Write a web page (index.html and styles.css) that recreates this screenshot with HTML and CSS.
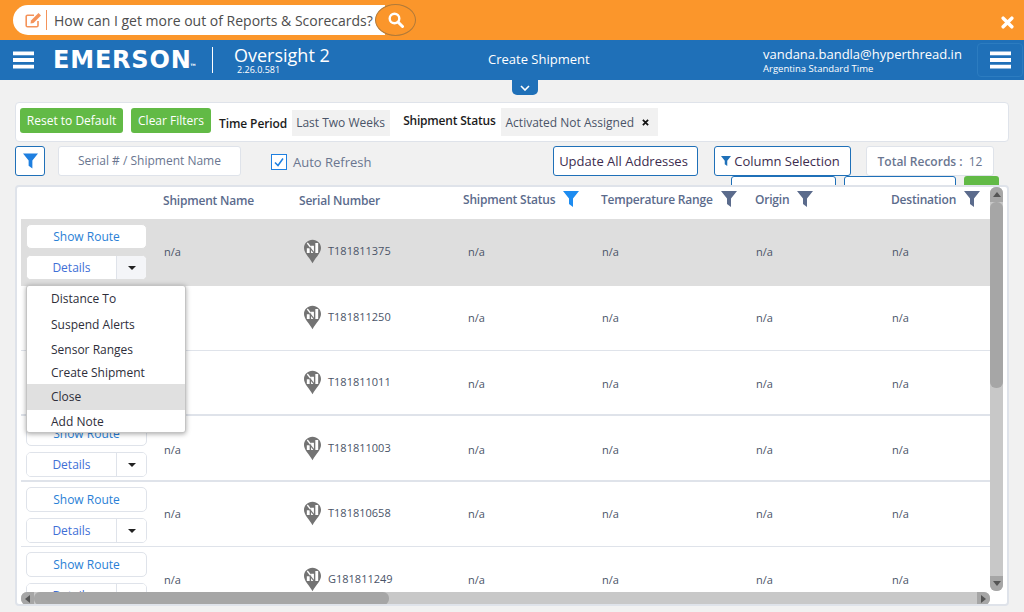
FILE: index.html
```html
<!DOCTYPE html>
<html lang="en">
<head>
    <meta charset="UTF-8">
    <title>Oversight 2</title>
    <link rel="stylesheet" href="styles.css">
</head>
<body>
    <svg class="sprites" width="0" height="0">
        <symbol id="funnel" viewBox="0 0 16 16"><path d="M0 0h16L10 7.500V16L6 13V7.500z"/></symbol>
        <symbol id="burger" viewBox="0 0 22 18"><path d="M0 0h22v4H0zM0 7h22v4H0zM0 14h22v4H0z"/></symbol>
        <symbol id="caret" viewBox="0 0 8 4"><path d="M0 0h8L4 4z"/></symbol>
        <symbol id="pin" viewBox="0 0 18 25">
            <path fill="#737373" d="M9 0c5 0 9 3.800 9 8.800 0 5.200-5.500 9.700-9 16.200C5.500 18.500 0 14 0 8.800 0 3.800 4 0 9 0z"/>
            <path fill="#fff" d="M3 9h3v5H3zM7.500 6.500h3V14h-3zM12 3.500h3V14h-3z"/>
            <path fill="none" stroke="#737373" stroke-width="1.300" d="M3 4.500L11.500 15"/>
            <path fill="none" stroke="#fff" stroke-width="1.400" d="M3.500 3.500L7 8"/>
        </symbol>
    </svg>

    <div class="topbar">
        <div class="ask">
            <svg class="ask-edit" viewBox="0 0 18 16" width="18" height="16">
                <path fill="none" stroke="#f4935a" stroke-width="1.600" d="M13 9v4.500c0 .8-.6 1.300-1.300 1.300H2.500c-.7 0-1.300-.5-1.300-1.300V4.500c0-.8.6-1.300 1.300-1.300H9"/>
                <path fill="#f4935a" d="M6 8.500L13.500 1 16 3.500 8.500 11l-3 .5z"/>
            </svg>
            <span class="ask-text">How can I get more out of Reports &amp; Scorecards?</span>
            <button class="ask-btn">
                <svg viewBox="0 0 16 16" width="16" height="16">
                    <circle cx="6.500" cy="6.500" r="4.800" fill="none" stroke="#fff" stroke-width="2.400"/>
                    <path d="M10 10l4.500 4.500" stroke="#fff" stroke-width="3" stroke-linecap="round"/>
                </svg>
            </button>
        </div>
        <svg class="top-close" viewBox="0 0 12 12" width="13" height="13">
            <path d="M2 2l8 8M10 2l-8 8" stroke="#fff" stroke-width="3.200" stroke-linecap="round"/>
        </svg>
    </div>

    <div class="header">
        <svg class="burger burger-left"><use href="#burger"/></svg>
        <div class="logo">EMERSON<span class="logo-tm">TM</span></div>
        <div class="product">
            <div class="product-name">Oversight 2</div>
            <div class="product-ver">2.26.0.581</div>
        </div>
        <div class="page-title">Create Shipment</div>
        <div class="user">
            <div class="user-mail">vandana.bandla@hyperthread.in</div>
            <div class="user-zone">Argentina Standard Time</div>
        </div>
        <div class="menu-box"><svg class="burger"><use href="#burger"/></svg></div>
    </div>
    <div class="tab-wrap">
        <div class="tab">
            <svg viewBox="0 0 10 6" width="10" height="6"><path d="M1 1l4 4 4-4" fill="none" stroke="#fff" stroke-width="1.600"/></svg>
        </div>
    </div>

    <div class="content">
        <div class="filters">
            <button class="btn-green btn-reset">Reset to Default</button>
            <button class="btn-green btn-clear">Clear Filters</button>
            <span class="filter-label label-time">Time Period</span>
            <span class="chip chip-time">Last Two Weeks</span>
            <span class="filter-label label-status">Shipment Status</span>
            <span class="chip chip-status">Activated Not Assigned
                <svg viewBox="0 0 8 8" width="7" height="7"><path d="M1 1l6 6M7 1L1 7" stroke="#111" stroke-width="2"/></svg>
            </span>
        </div>

        <div class="tools">
            <button class="btn-filter"><svg class="ico-blue"><use href="#funnel"/></svg></button>
            <div class="search">Serial # / Shipment Name</div>
            <label class="auto">
                <span class="check">
                    <svg viewBox="0 0 12 12" width="12" height="12"><path d="M2 6.500l3 3 5-7" fill="none" stroke="#1e7fe0" stroke-width="1.500"/></svg>
                </span>
                Auto Refresh
            </label>
            <button class="btn-line btn-update">Update All Addresses</button>
            <button class="btn-line btn-columns"><svg class="ico-small"><use href="#funnel"/></svg>Column Selection</button>
            <div class="total"><span class="total-label">Total Records :</span> 12</div>
        </div>

        <div class="behind">
            <span class="behind-a"></span>
            <span class="behind-b"></span>
            <span class="behind-c"></span>
        </div>

        <div class="grid">
            <div class="row head">
                <div></div>
                <div class="th th-plain">Shipment Name</div>
                <div class="th th-plain">Serial Number</div>
                <div class="th th-status">Shipment Status <svg class="ico-head ico-active"><use href="#funnel"/></svg></div>
                <div class="th th-temp">Temperature Range <svg class="ico-head"><use href="#funnel"/></svg></div>
                <div class="th th-origin">Origin <svg class="ico-head"><use href="#funnel"/></svg></div>
                <div class="th th-dest">Destination <svg class="ico-head"><use href="#funnel"/></svg></div>
            </div>

            <div class="row item item-active">
                <div class="actions">
                    <button class="btn-route">Show Route</button>
                    <div class="split"><button class="split-main">Details</button><button class="split-arrow"><svg><use href="#caret"/></svg></button></div>
                </div>
                <div class="td">n/a</div>
                <div class="td serial"><svg class="pin"><use href="#pin"/></svg>T181811375</div>
                <div class="td td-in">n/a</div>
                <div class="td">n/a</div>
                <div class="td">n/a</div>
                <div class="td">n/a</div>
            </div>

            <div class="row item item-thin">
                <div class="actions">
                    <button class="btn-route">Show Route</button>
                    <div class="split"><button class="split-main">Details</button><button class="split-arrow"><svg><use href="#caret"/></svg></button></div>
                </div>
                <div class="td">n/a</div>
                <div class="td serial"><svg class="pin"><use href="#pin"/></svg>T181811250</div>
                <div class="td td-in">n/a</div>
                <div class="td">n/a</div>
                <div class="td">n/a</div>
                <div class="td">n/a</div>
            </div>

            <div class="row item">
                <div class="actions">
                    <button class="btn-route">Show Route</button>
                    <div class="split"><button class="split-main">Details</button><button class="split-arrow"><svg><use href="#caret"/></svg></button></div>
                </div>
                <div class="td">n/a</div>
                <div class="td serial"><svg class="pin"><use href="#pin"/></svg>T181811011</div>
                <div class="td td-in">n/a</div>
                <div class="td">n/a</div>
                <div class="td">n/a</div>
                <div class="td">n/a</div>
            </div>

            <div class="row item item-tall">
                <div class="actions">
                    <button class="btn-route">Show Route</button>
                    <div class="split"><button class="split-main">Details</button><button class="split-arrow"><svg><use href="#caret"/></svg></button></div>
                </div>
                <div class="td">n/a</div>
                <div class="td serial"><svg class="pin"><use href="#pin"/></svg>T181811003</div>
                <div class="td td-in">n/a</div>
                <div class="td">n/a</div>
                <div class="td">n/a</div>
                <div class="td">n/a</div>
            </div>

            <div class="row item item-thin">
                <div class="actions">
                    <button class="btn-route">Show Route</button>
                    <div class="split"><button class="split-main">Details</button><button class="split-arrow"><svg><use href="#caret"/></svg></button></div>
                </div>
                <div class="td">n/a</div>
                <div class="td serial"><svg class="pin"><use href="#pin"/></svg>T181810658</div>
                <div class="td td-in">n/a</div>
                <div class="td">n/a</div>
                <div class="td">n/a</div>
                <div class="td">n/a</div>
            </div>

            <div class="row item item-last">
                <div class="actions">
                    <button class="btn-route">Show Route</button>
                    <div class="split"><button class="split-main">Details</button><button class="split-arrow"><svg><use href="#caret"/></svg></button></div>
                </div>
                <div class="td">n/a</div>
                <div class="td serial"><svg class="pin"><use href="#pin"/></svg>G181811249</div>
                <div class="td td-in">n/a</div>
                <div class="td">n/a</div>
                <div class="td">n/a</div>
                <div class="td">n/a</div>
            </div>

            <div class="menu">
                <div class="menu-item">Distance To</div>
                <div class="menu-item">Suspend Alerts</div>
                <div class="menu-item menu-short">Sensor Ranges</div>
                <div class="menu-item menu-short">Create Shipment</div>
                <div class="menu-item menu-hover">Close</div>
                <div class="menu-item menu-short">Add Note</div>
            </div>

            <div class="vbar">
                <span class="bar-end"><svg viewBox="0 0 8 5" width="8" height="5"><path d="M4 0l4 5H0z"/></svg></span>
                <span class="vbar-thumb"></span>
                <span class="bar-end bar-down"><svg viewBox="0 0 8 5" width="8" height="5"><path d="M0 0h8L4 5z"/></svg></span>
            </div>
            <div class="hbar">
                <span class="bar-end"><svg viewBox="0 0 5 8" width="5" height="8"><path d="M5 0v8L0 4z"/></svg></span>
                <span class="hbar-thumb"></span>
                <span class="bar-end bar-right"><svg viewBox="0 0 5 8" width="5" height="8"><path d="M0 0l5 4-5 4z"/></svg></span>
            </div>
        </div>
    </div>
</body>
</html>
```

FILE: styles.css
```css
* {
    box-sizing: border-box;
}

body {
    margin: 0;
    height: 612px;
    overflow: hidden;
    background: #f1f1f1;
    font-family: "Open Sans", sans-serif;
    font-size: 12px;
    color: #4a5468;
}

button {
    font-family: inherit;
    cursor: pointer;
}

.sprites {
    position: absolute;
}

.topbar {
    display: flex;
    align-items: center;
    justify-content: space-between;
    height: 40px;
    padding: 0 10px 0 13px;
    background: #fb962b;
}

.top-close {
    margin-top: 5px;
}

.ask {
    display: flex;
    align-items: center;
    width: 403px;
    height: 30px;
    background: linear-gradient(90deg, #fff 372px, transparent 372px);
    border-radius: 15px;
}

.ask-edit {
    margin-left: 12px;
    flex: none;
}

.ask-text {
    display: flex;
    align-items: center;
    flex: 1;
    height: 30px;
    margin-left: 3px;
    padding-left: 8px;
    font-size: 14px;
    color: #4d4d4d;
    white-space: nowrap;
    position: relative;
}

.ask-text::before {
    content: "";
    position: absolute;
    left: 0;
    top: 5px;
    bottom: 5px;
    border-left: 1px solid #f4935a;
}

.ask-btn {
    display: flex;
    align-items: center;
    justify-content: center;
    flex: none;
    width: 41px;
    height: 32px;
    margin-left: -10px;
    padding: 0;
    background: #fb962b;
    border: 1px solid #b07a3a;
    border-radius: 50%;
}

.header {
    display: flex;
    align-items: center;
    height: 40px;
    background: #1f70b8;
    color: #fff;
}

.burger {
    width: 21px;
    height: 18px;
    fill: #fff;
}

.burger-left {
    margin-left: 13px;
}

.logo {
    display: flex;
    width: 160px;
    margin-left: 19px;
    font-family: "DejaVu Sans", sans-serif;
    font-weight: 700;
    font-size: 24px;
    line-height: 26px;
    letter-spacing: 0.800px;
    border-right: 1px solid #fff;
}

.logo-tm {
    align-self: flex-end;
    margin: 0 0 6px -1px;
    font-size: 3px;
    line-height: 4px;
    letter-spacing: 0;
}

.product {
    width: 275px;
    padding-left: 21px;
}

.product-name {
    font-size: 18px;
    line-height: 20px;
}

.product-ver {
    padding-left: 3px;
    font-size: 9px;
    line-height: 10px;
}

.page-title {
    width: 275px;
    padding-bottom: 2px;
    font-size: 13px;
}

.user {
    width: 214px;
}

.user-mail {
    font-size: 13px;
    line-height: 18px;
}

.user-zone {
    font-size: 9.500px;
    line-height: 12px;
}

.menu-box {
    display: flex;
    align-items: center;
    justify-content: center;
    width: 46px;
    height: 34px;
    border: 1px solid #2c7cc0;
    border-radius: 4px;
}

.tab-wrap {
    height: 22px;
    padding-left: 512px;
}

.tab {
    display: flex;
    align-items: center;
    justify-content: center;
    width: 26px;
    height: 15px;
    background: #1f70b8;
    border-radius: 0 0 5px 5px;
}

.content {
    padding: 0 15px;
}

.filters {
    display: flex;
    align-items: flex-start;
    width: 994px;
    height: 40px;
    padding-left: 4px;
    background: #fff;
    border: 1px solid #dfe3ea;
    border-radius: 4px;
}

.btn-green {
    height: 25px;
    margin-top: 5px;
    padding: 0;
    color: #fff;
    font-size: 12px;
    background: #62ba46;
    border: none;
    border-radius: 3px;
}

.btn-reset {
    width: 103px;
}

.btn-clear {
    width: 80px;
    margin-left: 8px;
}

.filter-label {
    font-weight: 600;
    letter-spacing: -0.200px;
    color: #1c1c1c;
}

.label-time {
    margin-top: 12px;
    margin-left: 8px;
    letter-spacing: -0.100px;
}

.label-status {
    margin-top: 9px;
    margin-left: 13px;
}

.chip {
    display: flex;
    align-items: center;
    height: 26px;
    background: #f1f1f1;
    color: #4a5468;
    padding-left: 5px;
}

.chip-time {
    width: 98px;
    margin-top: 7px;
    margin-left: 5px;
    padding-bottom: 2px;
    padding-left: 4px;
}

.chip-status {
    width: 157px;
    height: 28px;
    margin-top: 5px;
    margin-left: 5px;
    gap: 8px;
}

.tools {
    display: flex;
    align-items: center;
    height: 30px;
    margin-top: 4px;
}

.btn-filter {
    display: flex;
    align-items: center;
    justify-content: center;
    width: 30px;
    height: 30px;
    padding: 0;
    background: #fff;
    border: 1px solid #1f70b8;
    border-radius: 3px;
}

.ico-blue {
    width: 15px;
    height: 16px;
    fill: #1e7fe0;
}

.search {
    display: flex;
    align-items: center;
    justify-content: center;
    width: 183px;
    height: 30px;
    margin-left: 13px;
    padding-bottom: 2px;
    color: #6a7690;
    background: #fff;
    border: 1px solid #dfe3ea;
    border-radius: 3px;
}

.auto {
    display: flex;
    align-items: center;
    gap: 6px;
    width: 282px;
    margin-left: 30px;
    padding-top: 2px;
    font-size: 13px;
    color: #6a7690;
}

.check {
    display: flex;
    align-items: center;
    justify-content: center;
    width: 16px;
    height: 16px;
    background: #fff;
    border: 1px solid #1e7fe0;
}

.btn-line {
    height: 30px;
    padding: 0;
    font-size: 13px;
    color: #3c2c4e;
    background: #fff;
    border: 1px solid #1f70b8;
    border-radius: 3px;
}

.btn-update {
    width: 145px;
    padding-right: 4px;
}

.btn-columns {
    display: flex;
    align-items: center;
    justify-content: center;
    gap: 3px;
    width: 137px;
    margin-left: 16px;
    padding-right: 4px;
}

.ico-small {
    width: 10px;
    height: 10px;
    fill: #1f70b8;
}

.total {
    width: 128px;
    height: 30px;
    margin-left: 15px;
    line-height: 29px;
    text-align: center;
    color: #6a7690;
    background: #fff;
    border: 1px solid #dfe3ea;
    border-radius: 3px;
}

.total-label {
    font-weight: 600;
    margin-right: 3px;
}

.behind {
    display: flex;
    height: 9px;
    padding-left: 716px;
}

.behind span {
    display: block;
    height: 12px;
}

.behind-a {
    width: 105px;
    background: #fff;
    border: 1px solid #1f70b8;
    border-radius: 3px;
}

.behind-b {
    width: 112px;
    margin-left: 8px;
    background: #fff;
    border: 1px solid #1f70b8;
    border-radius: 3px;
}

.behind-c {
    width: 35px;
    margin-left: 8px;
    background: #62ba46;
    border-radius: 3px;
}

.grid {
    position: relative;
    width: 994px;
    height: 421px;
    padding-left: 4px;
    overflow: hidden;
    background: #fff;
    border: 2px solid #dfe3ea;
    border-radius: 4px;
}

.row {
    display: grid;
    grid-template-columns: 142px 136px 164px 138px 154px 136px 99px;
    align-items: center;
    width: 969px;
}

.head {
    height: 32px;
}

.th {
    display: flex;
    align-items: center;
    font-weight: 600;
    letter-spacing: -0.200px;
    color: #5b6b8c;
    margin-top: -8px;
}

.th-plain {
    margin-top: -5px;
}

.th-status,
.th-temp,
.th-origin,
.th-dest {
    gap: 8px;
}

.ico-head {
    width: 16px;
    height: 16px;
    fill: #5b6b8c;
    flex: none;
}

.ico-active {
    fill: #1e8cf0;
}

.item {
    height: 65px;
    padding-top: 5px;
    align-items: start;
    border-bottom: 2px solid #dfe3ea;
}

.item-active {
    height: 67px;
    background: #dedede;
    border-bottom: none;
}

.item-thin {
    border-bottom-width: 1px;
}

.item-tall {
    height: 66px;
}

.actions {
    display: flex;
    flex-direction: column;
    gap: 6px;
    padding-left: 5px;
}

.td {
    align-self: center;
    padding-bottom: 3px;
    padding-left: 1px;
    font-size: 11px;
    color: #4a5468;
}

.item-thin .td,
.item-active .td {
    padding-bottom: 7px;
}

.td-in {
    padding-left: 5px;
}

.td.serial {
    display: flex;
    align-items: center;
    gap: 7px;
    padding-bottom: 7px;
    padding-left: 5px;
}

.item-thin .td.serial,
.item-active .td.serial {
    padding-bottom: 9px;
}

.item-last .td.serial {
    padding-bottom: 5px;
}

.pin {
    width: 17px;
    height: 25px;
    margin-top: 2px;
}

.btn-route {
    width: 121px;
    height: 25px;
    padding: 0;
    font-size: 12px;
    color: #2a7fd6;
    background: #fff;
    border: 1px solid #dfe3ea;
    border-radius: 5px;
}

.split {
    display: flex;
    width: 121px;
    height: 25px;
    background: #fff;
    border: 1px solid #dfe3ea;
    border-radius: 5px;
    overflow: hidden;
}

.split-main {
    width: 90px;
    padding: 0;
    font-size: 12px;
    color: #3f6fd6;
    background: #fff;
    border: none;
    border-right: 1px solid #dfe3ea;
}

.split-arrow {
    display: flex;
    align-items: center;
    justify-content: center;
    flex: 1;
    padding: 0;
    background: #fff;
    border: none;
}

.split-arrow svg {
    width: 8px;
    height: 4px;
    fill: #222;
}

.item-active .btn-route,
.item-active .split {
    border-color: #dedede;
}

.item-active .split-arrow {
    background: #f4f5f8;
}

.menu {
    position: absolute;
    left: 9px;
    top: 98px;
    width: 160px;
    height: 148px;
    background: #fff;
    border: 1px solid #c4c4c4;
    border-radius: 3px;
    box-shadow: 0 1px 5px rgba(0, 0, 0, 0.35);
    color: #2e2e3a;
}

.menu-item {
    display: flex;
    align-items: center;
    height: 26px;
    padding-left: 24px;
    padding-bottom: 2px;
}

.menu-short {
    height: 23px;
    padding-bottom: 0;
}

.menu-hover {
    height: 26px;
    background: #e0e0e0;
}

.vbar {
    position: absolute;
    left: 973px;
    top: 0;
    display: flex;
    flex-direction: column;
    width: 13px;
    height: 404px;
    background: #c8c8c8;
    border-radius: 6px;
}

.vbar-thumb {
    height: 186px;
    background: #a6a6a6;
    border-radius: 6px;
}

.hbar {
    position: absolute;
    left: 4px;
    top: 405px;
    display: flex;
    align-items: stretch;
    width: 969px;
    height: 13px;
    background: #c8c8c8;
    border-radius: 6px;
}

.hbar-thumb {
    width: 355px;
    background: #a6a6a6;
    border-radius: 6px;
}

.bar-end {
    display: flex;
    align-items: center;
    justify-content: center;
    flex: none;
    width: 13px;
    height: 15px;
    background: #a6a6a6;
    border-radius: 6px 6px 0 0;
}

.bar-end svg {
    fill: #555;
}

.bar-down {
    margin-top: auto;
    border-radius: 0 0 6px 6px;
}

.hbar .bar-end {
    height: 13px;
    border-radius: 6px 0 0 6px;
}

.hbar .bar-right {
    margin-left: auto;
    border-radius: 0 6px 6px 0;
}
```
